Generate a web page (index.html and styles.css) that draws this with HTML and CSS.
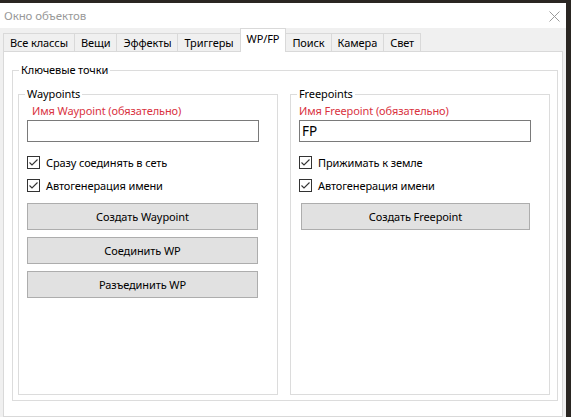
FILE: index.html
```html
<!DOCTYPE html>
<html lang="ru">
<head>
<meta charset="utf-8">
<title>Окно объектов</title>
<link rel="stylesheet" href="styles.css">
</head>
<body>
<div class="window">
  <div class="titlebar">
    <span class="title">Окно объектов</span>
    <svg class="close" width="11" height="11" viewBox="0 0 11 11"><path d="M0.5 0.5 L10.5 10.5 M10.5 0.5 L0.5 10.5" stroke="#9a9a9a" stroke-width="1" fill="none"/></svg>
  </div>
  <div class="tabbar">
    <div class="tab">Все классы</div>
    <div class="tab">Вещи</div>
    <div class="tab">Эффекты</div>
    <div class="tab">Триггеры</div>
    <div class="tab active">WP/FP</div>
    <div class="tab">Поиск</div>
    <div class="tab">Камера</div>
    <div class="tab">Свет</div>
  </div>
  <div class="page">
    <fieldset class="group outer">
      <legend>Ключевые точки</legend>
      <fieldset class="group inner">
        <legend>Waypoints</legend>
        <div class="req left-req">Имя Waypoint (обязательно)</div>
        <div class="input"></div>
        <label class="check first"><span class="box"><svg width="13" height="13" viewBox="0 0 13 13"><path d="M2.5 6.5 L5 9 L10.5 3.5" stroke="#333" stroke-width="1.1" fill="none"/></svg></span>Сразу соединять в сеть</label>
        <label class="check"><span class="box"><svg width="13" height="13" viewBox="0 0 13 13"><path d="M2.5 6.5 L5 9 L10.5 3.5" stroke="#333" stroke-width="1.1" fill="none"/></svg></span>Автогенерация имени</label>
        <div class="btn first-btn">Создать Waypoint</div>
        <div class="btn">Соединить WP</div>
        <div class="btn">Разъединить WP</div>
      </fieldset>
      <fieldset class="group inner">
        <legend>Freepoints</legend>
        <div class="req">Имя Freepoint (обязательно)</div>
        <div class="input filled">FP</div>
        <label class="check first"><span class="box"><svg width="13" height="13" viewBox="0 0 13 13"><path d="M2.5 6.5 L5 9 L10.5 3.5" stroke="#333" stroke-width="1.1" fill="none"/></svg></span>Прижимать к земле</label>
        <label class="check"><span class="box"><svg width="13" height="13" viewBox="0 0 13 13"><path d="M2.5 6.5 L5 9 L10.5 3.5" stroke="#333" stroke-width="1.1" fill="none"/></svg></span>Автогенерация имени</label>
        <div class="btn first-btn right-btn">Создать Freepoint</div>
      </fieldset>
    </fieldset>
  </div>
</div>
</body>
</html>
```
FILE: styles.css
```css
* { box-sizing: border-box; }
html, body { margin: 0; padding: 0; }
body {
  background: #2a2622;
  padding-top: 3px;
  font-family: "Noto Sans", "Open Sans", sans-serif;
  font-size: 11px;
  letter-spacing: -0.1px;
  color: #000;
  height: 417px;
  overflow: hidden;
}
.window {
  width: 566px;
  height: 420px;
  background: #f0f0f0;
}
.titlebar {
  height: 25px;
  background: #fff;
  display: flex;
  align-items: center;
  justify-content: space-between;
  padding: 0 6px 0 4px;
}
.title { color: #999; font-size: 11.5px; }
.close { display: block; margin-top: 2px; }
.tabbar {
  height: 23px;
  display: flex;
  align-items: flex-end;
  padding-left: 3px;
}
.tab {
  height: 18px;
  line-height: 17px;
  padding: 0 6px;
  border: 1px solid #d9d9d9;
  border-bottom: none;
  background: #f0f0f0;
  margin-right: -1px;
  white-space: nowrap;
}
.tab.active {
  line-height: 19px;
  background: #fff;
  position: relative;
  z-index: 1;
  margin-bottom: -1px;
  height: 24px;
}
.page {
  margin: 0 3px 0 3px;
  background: #fff;
  border: 1px solid #d9d9d9;
  height: 366px;
  padding: 10px 0 0 8px;
}
.group {
  border: 1px solid #dcdcdc;
  margin: 0;
  min-width: 0;
}
.group legend {
  padding: 0 2px;
  line-height: 16px;
}
.outer {
  width: 546px;
  height: 339px;
  display: flex;
  gap: 12px;
  padding: 8px 7px 0 5px;
}
.outer > legend { margin-left: 1px; }
.inner {
  width: 260px;
  height: 309px;
  padding: 0 0 0 8px;
  display: block;
}
.inner > legend { margin-left: -2px; }
.req {
  color: #d9333f;
  line-height: 16px;
  margin-top: 1px;
}
.left-req { padding-left: 5px; }
.input {
  width: 232px;
  height: 22px;
  border: 1px solid #7a7a7a;
  background: #fff;
  margin-top: 1px;
}
.input.filled {
  font-size: 13.5px;
  line-height: 20px;
  padding-left: 2px;
}
.check {
  display: flex;
  align-items: center;
  height: 16px;
  margin-top: 7px;
}
.check.first { margin-top: 12px; }
.box {
  width: 13px;
  height: 13px;
  border: 1px solid #333;
  margin-right: 6px;
  display: flex;
  align-items: center;
  justify-content: center;
  background: #fff;
}
.box svg { display: block; flex: none; }
.btn {
  width: 231px;
  height: 27px;
  border: 1px solid #adadad;
  background: #e1e1e1;
  display: flex;
  align-items: center;
  justify-content: center;
  margin-top: 7px;
}
.btn.first-btn { margin-top: 10px; }
.btn.right-btn { margin-left: 2px; width: 229px; }
```
